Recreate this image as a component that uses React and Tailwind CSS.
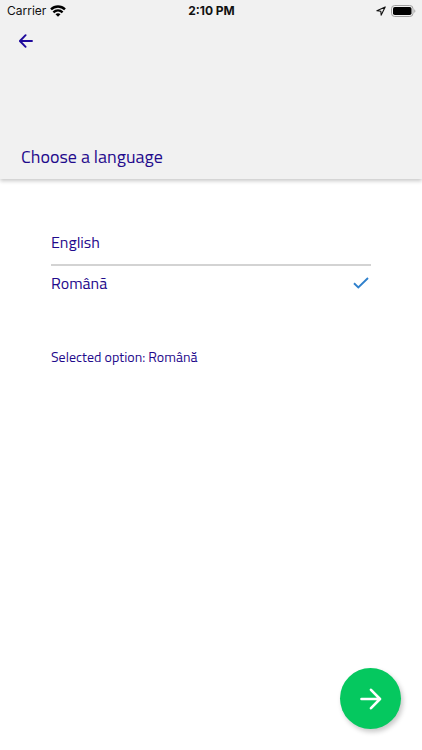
import { useState } from "react";

const languages = ["English", "Română"];

function StatusBar() {
  return (
    <div className="grid h-[22px] grid-cols-3 items-center pr-[6px] pl-[7px] font-['Inter','Liberation_Sans',sans-serif] text-xs leading-5 text-[#111111]">
      <div className="flex items-center gap-1">
        <span>Carrier</span>
        <svg width="16" height="12" viewBox="0 0 16 12" fill="none" stroke="#000" strokeWidth="2.4" aria-hidden="true">
          <path d="M1 4.4C5 .5 11 .5 15 4.4" />
          <path d="M3.4 7.3c2.7-2.5 6.5-2.5 9.2 0" />
          <path d="M5.5 9.2c1.4-1.3 3.6-1.3 5 0L8 11.8z" fill="#000" stroke="none" />
        </svg>
      </div>
      <span className="text-center font-bold">2:10 PM</span>
      <div className="flex items-center justify-end gap-[5px]">
        <svg width="10" height="10" viewBox="0 0 10 10" fill="none" stroke="#111" strokeWidth="1.1" strokeLinejoin="round" aria-hidden="true">
          <path d="M9.2.9.9 4.8l3.9.4.4 3.9z" />
        </svg>
        <svg width="25" height="12" viewBox="0 0 25 12" aria-hidden="true">
          <rect x=".5" y=".5" width="21.5" height="11" rx="3.2" fill="none" stroke="#a0a0a0" />
          <rect x="2" y="2" width="18.5" height="8" rx="1.8" fill="#000" />
          <path d="M23.3 4.2c1.4.5 1.4 3.1 0 3.6z" fill="#a0a0a0" />
        </svg>
      </div>
    </div>
  );
}

export default function App() {
  const [selected, setSelected] = useState("Română");

  return (
    <div className="flex min-h-screen flex-col bg-white font-['Titillium_Web','Noto_Sans',sans-serif] text-[#1f0a8c]">
      <header className="bg-[#f1f1f1] pb-2 shadow-[0_2px_4px_rgba(0,0,0,0.22)]">
        <StatusBar />
        <button type="button" aria-label="Back" className="ml-4 flex h-[38px] w-5 items-center justify-center">
          <svg width="14" height="14" viewBox="0 0 14 14" fill="none" stroke="#1f0a9c" strokeWidth="1.9" strokeLinecap="round" strokeLinejoin="round" aria-hidden="true">
            <path d="M13 7H1M6.6 1.2.9 7l5.7 5.8" />
          </svg>
        </button>
        <h1 className="mt-[83px] px-[21px] text-lg leading-7">Choose a language</h1>
      </header>

      <main className="px-[51px] pt-[42px]">
        <div role="radiogroup" aria-label="Language">
          {languages.map((language) => (
            <label
              key={language}
              className="flex h-[34px] cursor-pointer items-center justify-between text-base leading-6 not-last:h-[45px] not-last:border-b-2 not-last:border-[#d3d3d3] not-last:pb-[2px]"
            >
              <span>{language}</span>
              <input
                type="radio"
                name="language"
                value={language}
                checked={selected === language}
                onChange={() => setSelected(language)}
                className="peer sr-only"
              />
              <svg className="invisible mr-[2px] peer-checked:visible" width="16" height="12" viewBox="0 0 16 12" fill="none" stroke="#2f80cc" strokeWidth="1.9" aria-hidden="true">
                <path d="m1 6.2 4.3 4.2L15 1" />
              </svg>
            </label>
          ))}
        </div>
        <p className="mt-[47px] text-sm leading-5">Selected option: {selected}</p>
      </main>

      <footer className="mt-auto flex justify-end p-[21px]">
        <button
          type="button"
          aria-label="Continue"
          className="flex size-[61px] items-center justify-center rounded-full bg-[#05c85f] shadow-[2px_3px_5px_rgba(0,0,0,0.22)]"
        >
          <svg width="22" height="22" viewBox="0 0 22 22" fill="none" stroke="#fff" strokeWidth="2.6" strokeLinecap="round" strokeLinejoin="round" aria-hidden="true">
            <path d="M1.5 11h18M11 1.8l9 9.2-9 9.2" />
          </svg>
        </button>
      </footer>
    </div>
  );
}
